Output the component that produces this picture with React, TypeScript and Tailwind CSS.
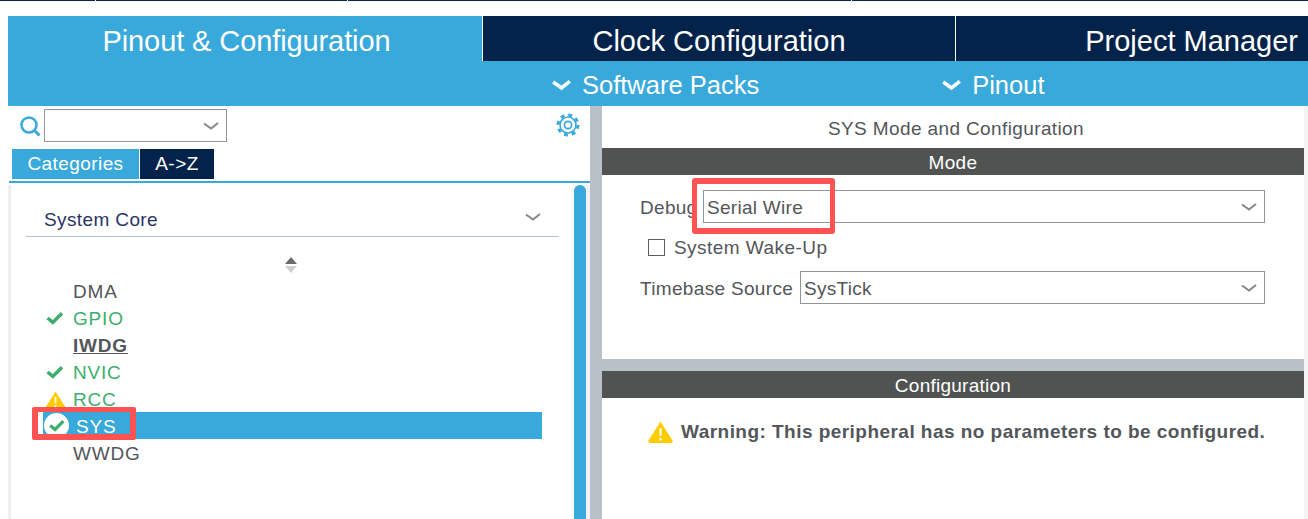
import React from "react";

const Chevron = ({ className = "", w = 2 }: { className?: string; w?: number }) => (
  <svg viewBox="0 0 16 8" className={className} fill="none" stroke="currentColor" strokeWidth={w}>
    <path d="M1 1.5 L8 6.5 L15 1" />
  </svg>
);

const Check = ({ className = "" }: { className?: string }) => (
  <svg viewBox="0 0 20 16" className={className} fill="none" stroke="#3eae6c" strokeWidth="4">
    <path d="M1.5 8 L7.5 13 L18 2.5" />
  </svg>
);

const Warn = ({ className = "" }: { className?: string }) => (
  <svg viewBox="0 0 25 22" className={className}>
    <path d="M12.5 0.5 L24.5 19.5 Q25 22 22.5 22 L2.5 22 Q0 22 0.5 19.5 Z" fill="#ffcc00" />
    <path d="M12.5 7 V15 M12.5 17 V19.5" stroke="#fff" strokeWidth="2" />
  </svg>
);

function SelectBox({ text, className }: { text: string; className: string }) {
  return (
    <div className={`flex h-[33px] items-center justify-between border border-[#8f969b] pl-[3px] pr-[7px] ${className}`}>
      <span className="pt-[3px] text-[19px] tracking-[0.28px] text-[#53565a]">{text}</span>
      <Chevron className="h-[8px] w-[16px] text-[#85888a]" />
    </div>
  );
}

function Row({ label, tone, icon, underline }: { label: string; tone: string; icon?: React.ReactNode; underline?: boolean }) {
  return (
    <div className="flex h-[27px] items-center">
      <div className="flex w-[62px] justify-end pr-[9px]">{icon}</div>
      <span className={`pt-[3px] text-[19px] tracking-[0.8px] ${tone} ${underline ? "font-bold underline" : ""}`}>{label}</span>
    </div>
  );
}

export default function App() {
  return (
    <div className="relative h-[519px] w-[1308px] overflow-hidden bg-white font-['Liberation_Sans',Arial,sans-serif]">
      <div className="flex h-[1px] bg-[#03234b]">
        <div className="ml-[95px] w-px bg-white" />
        <div className="ml-[251px] w-px bg-white" />
        <div className="ml-[503px] w-px bg-white" />
      </div>

      <div className="ml-[8px] mt-[15px] flex h-[45px] text-[29px] text-white">
        <div className="flex w-[474px] items-center justify-center bg-[#39a9dc] pl-[3px] pt-[7px] tracking-[-0.1px]">Pinout &amp; Configuration</div>
        <div className="flex w-[473px] items-center justify-center border-l border-white bg-[#03234b] pt-[7px]">Clock Configuration</div>
        <div className="flex flex-1 items-center justify-end border-l border-white bg-[#03234b] pr-[10px] pt-[7px]">Project Manager</div>
      </div>

      <div className="ml-[8px] flex h-[45px] items-center bg-[#39a9dc] pt-[3px] text-[25.5px] text-white">
        <Chevron className="ml-[544px] h-[10px] w-[19px]" w={3} />
        <span className="ml-[11px]">Software Packs</span>
        <Chevron className="ml-[183px] h-[10px] w-[19px]" w={3} />
        <span className="ml-[11px]">Pinout</span>
      </div>

      <div className="ml-[8px] flex h-[413px]">
        <div className="w-[582px] shrink-0">
          <div className="flex h-[43px] items-start pt-[3px]">
            <svg viewBox="0 0 22 22" className="ml-[11px] mt-[6px] h-[22px] w-[22px]" fill="none" stroke="#39a9dc">
              <circle cx="10" cy="10" r="7.5" strokeWidth="2.6" />
              <path d="M15.5 15.5 L20.5 20.5" strokeWidth="3" />
            </svg>
            <div className="ml-[3px] flex h-[33px] w-[183px] items-center justify-end border border-[#8f969b] pr-[7px]">
              <Chevron className="h-[8px] w-[16px] text-[#85888a]" />
            </div>
            <svg viewBox="0 0 24 24" className="ml-[329px] mt-[4px] h-[24px] w-[24px]" fill="none" stroke="#39a9dc">
              <circle cx="12" cy="12" r="3.6" strokeWidth="1.7" />
              <circle cx="12" cy="12" r="8" strokeWidth="1.6" />
              <circle cx="12" cy="12" r="10" strokeWidth="3" strokeDasharray="3.85 4" />
            </svg>
          </div>

          <div className="ml-[4px] flex h-[30px] text-[19px] text-white">
            <div className="flex w-[127px] items-center justify-center bg-[#39a9dc] tracking-[0.42px]">Categories</div>
            <div className="ml-px flex w-[74px] items-center justify-center bg-[#03234b] tracking-[0.5px]">A-&gt;Z</div>
          </div>
          <div className="ml-[1px] mt-[2px] h-[2px] bg-[#39a9dc]" />

          <div className="mt-[2px] flex h-[334px]">
            <div className="w-[3px] bg-[#efefef]" />
            <div className="w-[563px]">
              <div className="ml-[15px] w-[533px] border-b border-[#b4c3d2]">
                <div className="flex h-[51px] items-center justify-between pr-[18px] pt-[20px]">
                  <span className="ml-[18px] text-[19px] tracking-[0.38px] text-[#2a3566]">System Core</span>
                  <Chevron className="mb-[8px] h-[8px] w-[16px] text-[#85888a]" />
                </div>
              </div>
              <div className="flex h-[40px] justify-center pr-[4px] pt-[20px]">
                <svg viewBox="0 0 14 16" className="h-[16px] w-[14px]">
                  <path d="M7 0 L13 7 H1 Z" fill="#6b6b6b" />
                  <path d="M1 9 H13 L7 16 Z" fill="#cfcfcf" />
                </svg>
              </div>
              <div className="w-[531px]">
                <Row label="DMA" tone="text-[#53565a]" />
                <Row label="GPIO" tone="text-[#3eae6c]" icon={<Check className="h-[14px] w-[18px]" />} />
                <Row label="IWDG" tone="text-[#53565a]" underline />
                <Row label="NVIC" tone="text-[#3eae6c]" icon={<Check className="h-[14px] w-[18px]" />} />
                <Row label="RCC" tone="text-[#3eae6c]" icon={<Warn className="mr-[-2px] mt-[2px] h-[18px] w-[21px]" />} />
                <div className="flex h-[27px] items-center">
                  <div className="h-full w-[32px] bg-white" />
                  <div className="flex h-full flex-1 items-center bg-[#39a9dc]">
                    <div className="ml-px flex h-[25px] w-[25px] items-center justify-center rounded-full bg-white">
                      <Check className="h-[13px] w-[16px]" />
                    </div>
                    <span className="ml-[7px] pt-[3px] text-[19px] tracking-[0.8px] text-white">SYS</span>
                  </div>
                </div>
                <Row label="WWDG" tone="text-[#53565a]" />
              </div>
            </div>
            <div className="flex w-[16px] bg-[#f1f2f3]">
              <div className="w-[12px] rounded-t-[6px] bg-[#39a9dc]" />
            </div>
          </div>
        </div>

        <div className="w-[12px] shrink-0 bg-[#b7c1c7]" />

        <div className="flex-1 border-r-[4px] border-[#f3f3f3] text-[#53565a]">
          <div className="flex h-[42px] items-center justify-center pl-[6px] pt-[5px] text-[19px] tracking-[0.38px]">SYS Mode and Configuration</div>
          <div className="flex h-[27px] items-center justify-center bg-[#515352] pt-[3px] text-[19px] tracking-[0.37px] text-white">Mode</div>
          <div className="h-[184px] pl-[38px] pt-[15px]">
            <div className="flex h-[33px] items-center">
              <span className="w-[63px] pt-[3px] text-[19px] tracking-[0.3px]">Debug</span>
              <SelectBox text="Serial Wire" className="w-[562px]" />
            </div>
            <div className="mt-[14px] flex h-[20px] items-center pl-[8px]">
              <div className="h-[17px] w-[17px] border border-[#5c5f62]" />
              <span className="ml-[9px] pt-[2px] text-[19px] tracking-[0.45px]">System Wake-Up</span>
            </div>
            <div className="mt-[14px] flex h-[33px] items-center">
              <span className="w-[160px] pt-[3px] text-[19px] tracking-[0.33px]">Timebase Source</span>
              <SelectBox text="SysTick" className="w-[465px]" />
            </div>
          </div>
          <div className="h-[12px] bg-[#b7c1c7]" />
          <div className="flex h-[27px] items-center justify-center bg-[#515352] pt-[3px] text-[19px] tracking-[0.25px] text-white">Configuration</div>
          <div className="flex items-center pl-[46px] pt-[20px]">
            <Warn className="h-[22px] w-[25px]" />
            <span className="ml-[8px] text-[19px] font-bold tracking-[0.46px]">Warning: This peripheral has no parameters to be configured.</span>
          </div>
        </div>
      </div>

      <div className="absolute left-[32px] top-[407px] h-[33px] w-[104px] rounded-[2px] border-x-[6px] border-b-[6px] border-t-[5px] border-[#ff5252]" />
      <div className="absolute left-[692px] top-[178px] h-[56px] w-[143px] rounded-[3px] border-x-[5px] border-y-[6px] border-[#ff5252]" />
    </div>
  );
}
